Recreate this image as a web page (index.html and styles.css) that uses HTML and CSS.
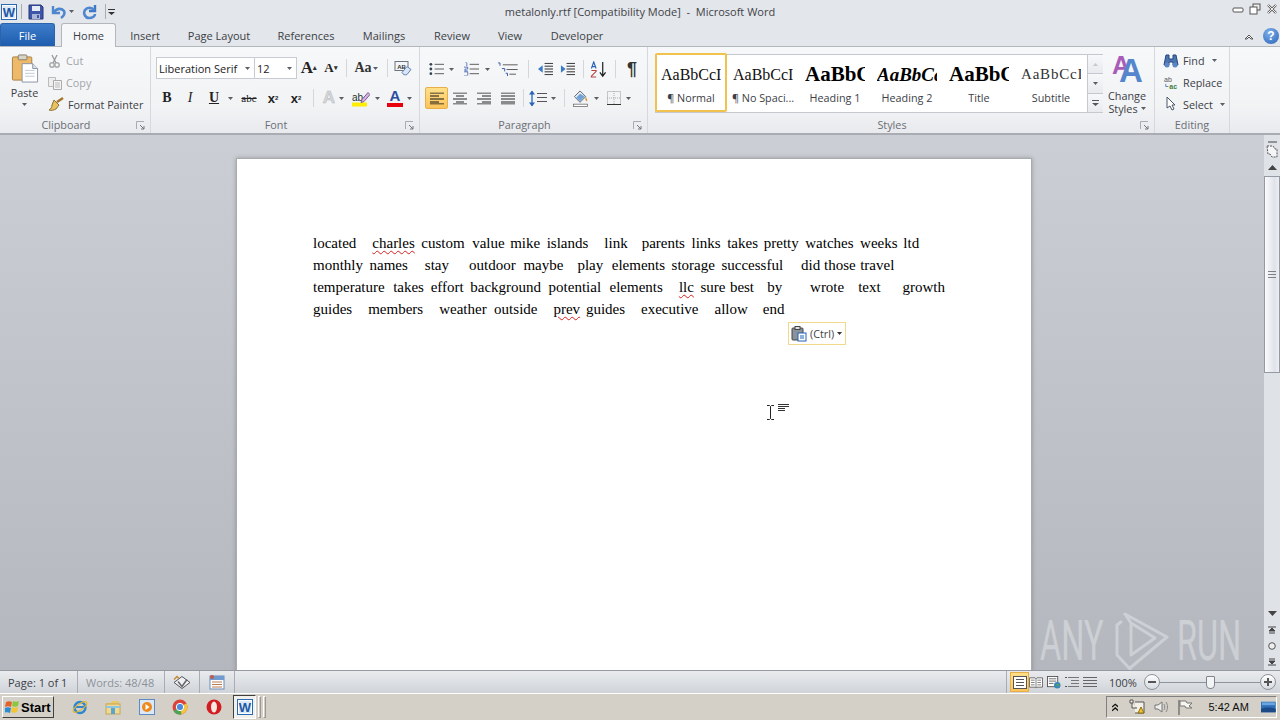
FILE: index.html
```html
<!DOCTYPE html>
<html lang="en">
<head>
<meta charset="utf-8">
<title>metalonly.rtf - Microsoft Word</title>
<link rel="stylesheet" href="styles.css">
</head>
<body>
<svg class="defs" width="0" height="0">
  <symbol id="arr" viewBox="0 0 5 3"><path d="M0 0h5L2.500 3z" fill="#5a5f66"/></symbol>
  <symbol id="bullets" viewBox="0 0 16 14"><path d="M6 2h10M6 7h10M6 12h10" stroke="#555" /><circle cx="2" cy="2" r="1.500" fill="#345"/><circle cx="2" cy="7" r="1.500" fill="#345"/><circle cx="2" cy="12" r="1.500" fill="#345"/></symbol>
  <symbol id="numbers" viewBox="0 0 16 14"><path d="M6 2h10M6 7h10M6 12h10" stroke="#555"/><path d="M1 0h2v4M0 5h4v2H1v2h3M0 10h4v4H0" fill="none" stroke="#35a" stroke-width=".8"/></symbol>
  <symbol id="multi" viewBox="0 0 22 16"><path d="M6 3h16M10 8h12M13 13h7" stroke="#555"/><path d="M1 1h2v3M5 7h3v3M9 12h2v3" fill="none" stroke="#35a"/></symbol>
  <symbol id="indentl" viewBox="0 0 16 14"><path d="M7 1h9M7 4h9M7 7h9M7 10h9M7 13h9" stroke="#222"/><path d="M0 7l5-4v8z" fill="#3a7bc8"/></symbol>
  <symbol id="indentr" viewBox="0 0 16 14"><path d="M7 1h9M7 4h9M7 7h9M7 10h9M7 13h9" stroke="#222"/><path d="M6 7L1 3v8z" fill="#3a7bc8"/></symbol>
  <symbol id="sort" viewBox="0 0 18 18"><path d="M14 1v14M11 12l3 4 3-4" fill="none" stroke="#222" stroke-width="1.300"/><path d="M2 8l2.500-7L7 8M3 6h3" fill="none" stroke="#2a62b5" stroke-width="1.200"/><path d="M2 10h5v1l-5 5v1h5" fill="none" stroke="#b8413a" stroke-width="1.200"/></symbol>
  <symbol id="al" viewBox="0 0 14 12"><path d="M0 .5h14M0 3.500h9M0 6.500h14M0 9.500h9M0 11.500h14" stroke="#111"/></symbol>
  <symbol id="ac" viewBox="0 0 14 12"><path d="M0 .5h14M3 3.500h8M0 6.500h14M3 9.500h8M0 11.500h14" stroke="#222"/></symbol>
  <symbol id="ar" viewBox="0 0 14 12"><path d="M0 .5h14M5 3.500h9M0 6.500h14M5 9.500h9M0 11.500h14" stroke="#222"/></symbol>
  <symbol id="aj" viewBox="0 0 14 12"><path d="M0 .5h14M0 3.500h14M0 6.500h14M0 9.500h14M0 11.500h14" stroke="#222"/></symbol>
  <symbol id="spacing" viewBox="0 0 18 16"><path d="M3 1v14" stroke="#3a7bc8" stroke-width="1.500"/><path d="M0 4l3-4 3 4zM0 12l3 4 3-4z" fill="#2a62b5"/><path d="M8 3h10M8 7h10M8 11h10" stroke="#555"/></symbol>
  <symbol id="fill" viewBox="0 0 18 18"><path d="M8 1l6 6-6 6-6-6z" fill="#e6eaf0" stroke="#5a6470"/><path d="M8 4l5 3-5 5-4-4z" fill="#6fa2d8"/><path d="M14 7c2 3 2 5 1 5s-2-2-1-5z" fill="#d89b3a"/><rect x="1" y="15" width="15" height="2.500" fill="#fff" stroke="#666" stroke-width=".8"/></symbol>
  <symbol id="border" viewBox="0 0 14 14"><rect x=".5" y=".5" width="13" height="13" fill="none" stroke="#999" stroke-dasharray="1 1"/><path d="M7 0v14M0 7h14" stroke="#aaa" stroke-dasharray="1 1"/><path d="M0 13.500h14" stroke="#333"/></symbol>
  <symbol id="monitor" viewBox="0 0 16 12"><rect width="16" height="12" fill="#2f6fb8"/><path d="M0 8c5-2 10-2 16 0v4H0z" fill="#1b4a86"/><rect x="1" y="1" width="14" height="3" fill="#6aa5df"/></symbol>
  <symbol id="viewpage" viewBox="0 0 14 13"><rect x=".5" y=".5" width="13" height="12" fill="#fff" stroke="#555"/><path d="M3 3.500h8M3 6.500h8M3 9.500h8" stroke="#555"/></symbol>
  <symbol id="viewbook" viewBox="0 0 15 13"><path d="M.5 1.500h6l1 1 1-1h6v10h-6l-1 1-1-1h-6z" fill="#fff" stroke="#666"/><path d="M7.500 2v10M2 4h4M2 6.500h4M2 9h4M9 4h4M9 6.500h4M9 9h4" stroke="#777"/></symbol>
  <symbol id="viewweb" viewBox="0 0 15 14"><rect x=".5" y=".5" width="11" height="11" fill="#fff" stroke="#555"/><path d="M2 3h8M2 5.500h8M2 8h5" stroke="#666"/><circle cx="11" cy="10" r="3.500" fill="#3a88b8"/><path d="M9 10l3-2 1 3z" fill="#5aa84a"/></symbol>
  <symbol id="viewoutline" viewBox="0 0 14 12"><path d="M3 1h11M6 4h8M6 7h8M3 10h11" stroke="#777"/><path d="M0 1h2M0 10h2" stroke="#555"/></symbol>
  <symbol id="viewdraft" viewBox="0 0 14 12"><path d="M0 1h14M0 4h14M0 7h14M0 10h14" stroke="#666"/></symbol>
</svg>

<div class="app">
  <header class="titlebar">
    <div class="qat">
      <svg class="ico16" viewBox="0 0 16 16"><rect x=".5" y=".5" width="15" height="15" fill="#fff" stroke="#2a6ab0"/><rect x="2" y="2" width="12" height="12" fill="#dde9f6"/><text x="8" y="13" class="svgw">W</text></svg>
      <span class="qsep"></span>
      <svg class="ico16" viewBox="0 0 16 16"><path d="M1 1h12l2 2v12H1z" fill="#3e56a8" stroke="#26367a"/><rect x="4" y="2" width="8" height="5" fill="#e7ecf6"/><rect x="4" y="10" width="8" height="5" fill="#aab4d4"/><rect x="9" y="11" width="2" height="3" fill="#3e56a8"/></svg>
      <svg class="ico16 gap-u" viewBox="0 0 16 16"><path d="M3 2v7h7" fill="none" stroke="#4f87cf" stroke-width="2.400"/><path d="M4 8c3-4 8-4 10-1 1 2 0 5-3 7" fill="none" stroke="#4f87cf" stroke-width="2.600"/></svg>
      <svg class="arrow3" viewBox="0 0 5 3"><use href="#arr"/></svg>
      <svg class="ico16 gap-r" viewBox="0 0 16 16"><path d="M13 1v6H7" fill="none" stroke="#3d78c6" stroke-width="2.400"/><path d="M12 6C10 3 5 3 3 6c-2 3 0 8 4 8s6-2 6-4" fill="none" stroke="#4f87cf" stroke-width="2.600"/></svg>
      <span class="qsep gap-q"></span>
      <svg class="qdrop" viewBox="0 0 7 6"><path d="M0 0h7v1H0zM0 3h7L3.500 6z" fill="#333"/></svg>
    </div>
    <div class="title">metalonly.rtf [Compatibility Mode]&nbsp; -&nbsp; Microsoft Word</div>
    <div class="winctl">
      <svg class="wi" viewBox="0 0 12 12"><rect x="1" y="5" width="10" height="4" rx="1" fill="#fff" stroke="#555"/></svg>
      <svg class="wi" viewBox="0 0 12 12"><rect x="4" y="1" width="7" height="6" fill="#eee" stroke="#555"/><rect x="1" y="4" width="7" height="7" fill="#fff" stroke="#555"/></svg>
      <svg class="wi" viewBox="0 0 12 12"><path d="M2 2l8 8M10 2l-8 8" stroke="#666" stroke-width="2.400"/><path d="M2 2l8 8M10 2l-8 8" stroke="#eee" stroke-width="1"/></svg>
    </div>
  </header>

  <nav class="tabs">
    <div class="tab file">File</div>
    <div class="tab home">Home</div>
    <div class="tab t-insert">Insert</div>
    <div class="tab t-layout">Page Layout</div>
    <div class="tab t-ref">References</div>
    <div class="tab t-mail">Mailings</div>
    <div class="tab t-rev">Review</div>
    <div class="tab t-view">View</div>
    <div class="tab t-dev">Developer</div>
    <div class="tabright">
      <svg class="collapse" viewBox="0 0 10 7"><path d="M1 6l4-4 4 4-2 0-2-2-2 2z" fill="#fff" stroke="#555"/></svg>
      <div class="help">?</div>
    </div>
  </nav>

  <section class="ribbon">
    <div class="group g-clip">
      <div class="body clip-body">
        <div class="paste">
          <svg class="paste-ico" viewBox="0 0 28 30"><rect x="1" y="3" width="20" height="24" rx="1" fill="#eeb968" stroke="#a5814a"/><rect x="7" y="1" width="9" height="5" rx="1" fill="#d9d4c8" stroke="#857b68"/><path d="M11 10h11l5 5v14H11z" fill="#fff" stroke="#8a93a2"/><path d="M22 10v5h5" fill="#dfe4ec" stroke="#8a93a2"/><path d="M14 17h10M14 20h10M14 23h10" stroke="#c3cad6"/></svg>
          <span class="paste-label">Paste</span>
          <svg class="arrow3" viewBox="0 0 5 3"><use href="#arr"/></svg>
        </div>
        <div class="clip-small">
          <div class="sm off"><svg class="ico14" viewBox="0 0 14 14"><path d="M4 1l4 8M9 1L5 9" stroke="#999" stroke-width="1.300"/><circle cx="4" cy="11" r="2.200" fill="none" stroke="#aaa" stroke-width="1.500"/><circle cx="9" cy="11" r="2.200" fill="none" stroke="#aaa" stroke-width="1.500"/></svg><span>Cut</span></div>
          <div class="sm off"><svg class="ico14" viewBox="0 0 14 14"><path d="M.5 1.500h7v9h-7z" fill="#eee" stroke="#bbb"/><path d="M5.500 4.500h8v9h-8z" fill="#f4f4f4" stroke="#aaa"/><path d="M7 7h5M7 9h5M7 11h5" stroke="#bbb"/></svg><span>Copy</span></div>
          <div class="sm"><svg class="ico14 brush" viewBox="0 0 16 14"><path d="M9 5L15 1" stroke="#a5752a" stroke-width="2.400"/><path d="M6 3l5 5-3 4c-2 1-5 2-7 1 2-1 3-3 3-5z" fill="#e8c25f" stroke="#8c7234"/></svg><span>Format Painter</span></div>
        </div>
      </div>
      <footer class="label lab-l">Clipboard<svg class="launcher" viewBox="0 0 9 9"><path d="M.5 8V.5H8" fill="none" stroke="#a8acb2"/><path d="M4 4l4 4M8 5v3H5" fill="none" stroke="#6f7680"/></svg></footer>
    </div>

    <div class="group g-font">
      <div class="body rows">
        <div class="row row-a">
          <div class="combo c-font"><span>Liberation Serif</span><svg class="arrow3" viewBox="0 0 5 3"><use href="#arr"/></svg></div>
          <div class="combo c-size"><span>12</span><svg class="arrow3" viewBox="0 0 5 3"><use href="#arr"/></svg></div>
          <div class="b w24 growa">A<sup>▴</sup></div>
          <div class="b w20 growb">A<sup>▾</sup></div>
          <span class="sep m-s1"></span>
          <div class="b w38 case">Aa<svg class="arrow3" viewBox="0 0 5 3"><use href="#arr"/></svg></div>
          <span class="sep m-s5"></span>
          <div class="b w30"><svg class="ico18" viewBox="0 0 18 16"><rect x="1" y="1" width="13" height="9" fill="#f3f5f8" stroke="#6d7580"/><text x="7.500" y="8" class="svgab">AB</text><path d="M8 12l5-6 4 3-4 5c-2 1-4 0-5-2z" fill="#dbe6f4" stroke="#5f83b3"/></svg></div>
        </div>
        <div class="row row-b">
          <div class="b w22 fb">B</div>
          <div class="b w24 fi">I</div>
          <div class="b w24 fu">U</div>
          <svg class="arrow3 w10a" viewBox="0 0 5 3"><use href="#arr"/></svg>
          <div class="b w26 fs">abc</div>
          <div class="b w22 fx">x<sub>2</sub></div>
          <div class="b w24 fx">x<sup>2</sup></div>
          <span class="sep m-s2"></span>
          <div class="b w20 ftfx">A</div>
          <svg class="arrow3 a-gray" viewBox="0 0 5 3"><use href="#arr"/></svg>
          <div class="b w22"><svg class="ico18" viewBox="0 0 18 16"><rect x="0" y="12" width="15" height="4" fill="#ffee00"/><text x="0" y="10" class="svgabs">ab</text><path d="M10 9l6-7 2 2-6 7-3 1z" fill="#d9b3e0" stroke="#7b5a92"/></svg></div>
          <svg class="arrow3 a-hl" viewBox="0 0 5 3"><use href="#arr"/></svg>
          <div class="b w20 fcolor">A</div>
          <svg class="arrow3 w8a" viewBox="0 0 5 3"><use href="#arr"/></svg>
        </div>
      </div>
      <footer class="label lab-l">Font<svg class="launcher" viewBox="0 0 9 9"><path d="M.5 8V.5H8" fill="none" stroke="#a8acb2"/><path d="M4 4l4 4M8 5v3H5" fill="none" stroke="#6f7680"/></svg></footer>
    </div>

    <div class="group g-para">
      <div class="body rows para-rows">
        <div class="row row-p1">
          <div class="b w22"><svg class="ico15" viewBox="0 0 16 14"><use href="#bullets"/></svg></div>
          <svg class="arrow3 a-list" viewBox="0 0 5 3"><use href="#arr"/></svg>
          <div class="b w24"><svg class="ico15" viewBox="0 0 16 14"><use href="#numbers"/></svg></div>
          <svg class="arrow3 w8a" viewBox="0 0 5 3"><use href="#arr"/></svg>
          <div class="b w30"><svg class="ico21" viewBox="0 0 22 16"><use href="#multi"/></svg></div>
          <span class="sep m-s6"></span>
          <div class="b w22 m-i"><svg class="ico15" viewBox="0 0 16 14"><use href="#indentl"/></svg></div>
          <div class="b w22"><svg class="ico15" viewBox="0 0 16 14"><use href="#indentr"/></svg></div>
          <span class="sep m-s7"></span>
          <div class="b w28"><svg class="ico18" viewBox="0 0 18 18"><use href="#sort"/></svg></div>
          <span class="sep m-s8"></span>
          <div class="b w32 pil">¶</div>
        </div>
        <div class="row row-p2">
          <div class="b w23 on"><svg class="ico14b" viewBox="0 0 14 12"><use href="#al"/></svg></div>
          <div class="b w24"><svg class="ico14b" viewBox="0 0 14 12"><use href="#ac"/></svg></div>
          <div class="b w24"><svg class="ico14b" viewBox="0 0 14 12"><use href="#ar"/></svg></div>
          <div class="b w23"><svg class="ico14b" viewBox="0 0 14 12"><use href="#aj"/></svg></div>
          <span class="sep m-s3"></span>
          <div class="b w22"><svg class="ico18" viewBox="0 0 18 16"><use href="#spacing"/></svg></div>
          <svg class="arrow3 w8a" viewBox="0 0 5 3"><use href="#arr"/></svg>
          <span class="sep m-s4"></span>
          <div class="b w24"><svg class="ico18" viewBox="0 0 18 18"><use href="#fill"/></svg></div>
          <svg class="arrow3 a-fill" viewBox="0 0 5 3"><use href="#arr"/></svg>
          <div class="b w24"><svg class="ico14" viewBox="0 0 14 14"><use href="#border"/></svg></div>
          <svg class="arrow3" viewBox="0 0 5 3"><use href="#arr"/></svg>
        </div>
      </div>
      <footer class="label lab-l">Paragraph<svg class="launcher" viewBox="0 0 9 9"><path d="M.5 8V.5H8" fill="none" stroke="#a8acb2"/><path d="M4 4l4 4M8 5v3H5" fill="none" stroke="#6f7680"/></svg></footer>
    </div>

    <div class="group g-styles">
      <div class="body styles-body">
        <div class="gallery">
          <div class="style sel"><div class="pv">AaBbCcI</div><div class="nm">¶ Normal</div></div>
          <div class="style"><div class="pv">AaBbCcI</div><div class="nm">¶ No Spaci...</div></div>
          <div class="style"><div class="pv h1">AaBbCc</div><div class="nm">Heading 1</div></div>
          <div class="style"><div class="pv h2">AaBbCc</div><div class="nm">Heading 2</div></div>
          <div class="style"><div class="pv h3">AaBbCc</div><div class="nm">Title</div></div>
          <div class="style"><div class="pv sub">AaBbCcI</div><div class="nm">Subtitle</div></div>
          <div class="gscroll">
            <div class="gs"><svg class="arrow3" viewBox="0 0 5 3"><path d="M2.500 0L5 3H0z" fill="#c5c8cd"/></svg></div>
            <div class="gs"><svg class="arrow3" viewBox="0 0 5 3"><use href="#arr"/></svg></div>
            <div class="gs"><svg class="more" viewBox="0 0 7 6"><path d="M0 0h7v1H0zM0 3h7L3.500 6z" fill="#555"/></svg></div>
          </div>
        </div>
        <div class="change">
          <svg class="change-ico" viewBox="0 0 32 34"><text x="1" y="24" class="svgA1">A</text><text x="8" y="32" class="svgA2">A</text></svg>
          <span class="chg">Change</span>
          <span class="chg">Styles <svg class="arrow3" viewBox="0 0 5 3"><use href="#arr"/></svg></span>
        </div>
      </div>
      <footer class="label lab-l">Styles<svg class="launcher" viewBox="0 0 9 9"><path d="M.5 8V.5H8" fill="none" stroke="#a8acb2"/><path d="M4 4l4 4M8 5v3H5" fill="none" stroke="#6f7680"/></svg></footer>
    </div>

    <div class="group g-edit">
      <div class="body edit-body">
        <div class="sm"><svg class="ico14 wide" viewBox="0 0 16 14"><path d="M3 1h3v4h4V1h3l2 10h-5V8H6v3H1z" fill="#4b74b2" stroke="#26467c"/><circle cx="4" cy="11" r="2.500" fill="#5d87c4"/><circle cx="12" cy="11" r="2.500" fill="#5d87c4"/></svg><span>Find</span><svg class="arrow3 mr" viewBox="0 0 5 3"><use href="#arr"/></svg></div>
        <div class="sm"><svg class="ico14 wide" viewBox="0 0 16 16"><text x="0" y="7" class="svgrep">ab</text><text x="6" y="15" class="svgrep2">ac</text><path d="M2 9v3h3" fill="none" stroke="#4b74b2"/></svg><span>Replace</span></div>
        <div class="sm"><svg class="ico14 wide" viewBox="0 0 16 14"><path d="M4 0v11l3-2 2 4 2-1-2-4h3z" fill="#fff" stroke="#4a5666"/></svg><span>Select</span><svg class="arrow3 mr" viewBox="0 0 5 3"><use href="#arr"/></svg></div>
      </div>
      <footer class="label">Editing</footer>
    </div>
  </section>

  <main class="workspace">
    <div class="canvas">
      <article class="page">
        <p class="ln">located    <span class="k1"></span><span class="sq">charles</span>  <span class="n1"></span>custom  value  <span class="n2"></span>mike  <span class="n1"></span>islands    <span class="k1"></span>link    <span class="n1"></span>parents  <span class="n1"></span>links  <span class="n1"></span>takes <span class="k2"></span>pretty  <span class="n1"></span>watches  <span class="n1"></span>weeks <span class="k2"></span>ltd</p>
        <p class="ln">monthly  <span class="n1"></span>names    <span class="k2"></span>stay    <span class="k5"></span>outdoor <span class="k4"></span>maybe    <span class="n1"></span>play  <span class="k1"></span>elements  <span class="n1"></span>storage  <span class="n1"></span>successful    <span class="k3"></span>did those  <span class="n3"></span>travel</p>
        <p class="ln">temperature  <span class="k1"></span>takes <span class="k3"></span>effort  <span class="n1"></span>background  potential  <span class="k1"></span>elements    <span class="k1"></span><span class="sq">llc</span>  <span class="n1"></span>sure  <span class="n3"></span>best   <span class="k2"></span>by     <span class="k9"></span>wrote    <span class="n1"></span>text     <span class="k3"></span>growth</p>
        <p class="ln">guides    <span class="k1"></span>members    <span class="k1"></span>weather  outside    <span class="k1"></span><span class="sq">prev</span> <span class="k2"></span>guides    <span class="k1"></span>executive    <span class="k1"></span>allow    end</p>
      </article>
      <div class="smarttag">
        <svg class="ico16" viewBox="0 0 16 16"><rect x="1" y="2" width="11" height="12" rx="1" fill="#8b929c" stroke="#444"/><rect x="4" y="0.500" width="5" height="3" fill="#ddd" stroke="#444"/><rect x="7" y="7" width="8" height="8" fill="#fff" stroke="#1f62b5"/><path d="M9 10h4M9 12h4" stroke="#1f62b5"/></svg>
        <span>(Ctrl)</span>
        <svg class="arrow3" viewBox="0 0 5 3"><path d="M0 0h5L2.500 3z" fill="#333"/></svg>
      </div>
      <svg class="ibeam" viewBox="0 0 26 22"><path d="M2 2.500h2.500l1 1 1-1H9M5.500 3.500v12M2 16.500h2.500l1-1 1 1H9" fill="none" stroke="#222"/><path d="M13 1.500h11M13 3.500h11M13 5.500h7M13 7.500h7" stroke="#333"/></svg>
      <div class="watermark">
        <span class="wm wm-a">ANY</span>
        <svg class="wm-logo" viewBox="0 0 58 60"><path d="M8 11L4 14v30l13 14M12 3l42 23-37 31M18 12v32l24-17z M12 3l6 9" fill="none" stroke="#fff" stroke-width="3" stroke-linejoin="round" stroke-linecap="round"/></svg>
        <span class="wm wm-r">RUN</span>
      </div>
    </div>
    <aside class="vscroll">
      <div class="ruler"><span class="dash"></span><svg class="rul" viewBox="0 0 12 14"><path d="M1 1h6l2 3h2v8H6l-2-3H2z" fill="#f4f5f7" stroke="#555" stroke-dasharray="2 1"/></svg></div>
      <div class="sbtn"><svg class="tri" viewBox="0 0 9 5"><path d="M4.500 0L9 5H0z" fill="#444"/></svg></div>
      <div class="thumb"><span class="grip"></span></div>
      <div class="strack"></div>
      <div class="sbtn"><svg class="tri" viewBox="0 0 9 5"><path d="M0 0h9L4.500 5z" fill="#444"/></svg></div>
      <div class="sbtn s2"><svg class="tri2" viewBox="0 0 8 8"><path d="M0 1h8M4 2L1 5h6zM1 7h6" stroke="#444" fill="#444"/></svg></div>
      <div class="sbtn s2"><svg class="tri2" viewBox="0 0 8 8"><circle cx="4" cy="4" r="3.300" fill="#eee" stroke="#555"/></svg></div>
      <div class="sbtn s2"><svg class="tri2" viewBox="0 0 8 8"><path d="M1 1h6M1 3h6L4 6zM0 7h8" stroke="#444" fill="#444"/></svg></div>
    </aside>
  </main>

  <footer class="status">
    <div class="cell c1">Page: 1 of 1</div>
    <div class="cell c2">Words: 48/48</div>
    <div class="cell c3"><svg class="ico18" viewBox="0 0 18 16"><path d="M1 8l8-6 8 6-8 6z" fill="#eef1f5" stroke="#555"/><path d="M5 7l4 5 5-7" fill="none" stroke="#666" stroke-width="1.500"/><path d="M1 5l3-3 2 2" fill="none" stroke="#c78b36" stroke-width="1.500"/></svg></div>
    <div class="cell c4"><svg class="ico16" viewBox="0 0 16 16"><rect x="1" y="2" width="14" height="13" fill="#fff" stroke="#6a8bb5"/><rect x="1" y="2" width="14" height="4" fill="#6f9bd1"/><path d="M3 8h10M3 10.500h10M3 13h10" stroke="#b97b50"/><circle cx="3" cy="3" r="2" fill="#c05a4a"/></svg></div>
    <div class="stat-right">
      <span class="vsep"></span>
      <div class="vb on"><svg class="ico14b" viewBox="0 0 14 13"><use href="#viewpage"/></svg></div>
      <div class="vb v-book"><svg class="ico14b" viewBox="0 0 15 13"><use href="#viewbook"/></svg></div>
      <div class="vb"><svg class="ico14b" viewBox="0 0 15 14"><use href="#viewweb"/></svg></div>
      <div class="vb"><svg class="ico14b" viewBox="0 0 14 12"><use href="#viewoutline"/></svg></div>
      <div class="vb"><svg class="ico14b" viewBox="0 0 14 12"><use href="#viewdraft"/></svg></div>
      <span class="zoomtxt">100%</span>
      <div class="zbtn"><span class="zh"></span></div>
      <div class="slider"><span class="knob"></span></div>
      <div class="zbtn"><span class="zh"></span><span class="zv"></span></div>
    </div>
  </footer>

  <footer class="taskbar">
    <div class="start">
      <svg class="flag" viewBox="0 0 16 14"><path d="M1 2c2-1 4-1 6 0L6 7C4 6 2 6 0 7z" fill="#e2622c"/><path d="M8 1c2 1 4 1 6 0l-1 5c-2 1-4 1-6 0z" fill="#8cc63f"/><path d="M0 8c2-1 4-1 6 0l-1 5c-2-1-4-1-6 0z" fill="#2a8dd4"/><path d="M7 7c2 1 4 1 6 0l-1 5c-2 1-4 1-6 0z" fill="#f4c431"/></svg>
      <span>Start</span>
    </div>
    <div class="tk tk-ie"><svg class="ico16" viewBox="0 0 16 16"><circle cx="8" cy="8.500" r="5.500" fill="none" stroke="#2f86cf" stroke-width="2.400"/><path d="M3 8h10" stroke="#2f86cf" stroke-width="2"/><ellipse cx="8" cy="8" rx="8" ry="3" fill="none" stroke="#e0b52c" transform="rotate(-35 8 8)"/></svg></div>
    <div class="tk"><svg class="ico16" viewBox="0 0 16 16"><path d="M1 4h5l1-2h7v3H1z" fill="#e8c869"/><rect x="1" y="5" width="14" height="10" fill="#f1d98f" stroke="#c2a658"/><rect x="6" y="9" width="4" height="6" fill="#5aa5cf"/><rect x="1" y="7" width="14" height="2" fill="#8ec6e2"/></svg></div>
    <div class="tk"><svg class="ico16" viewBox="0 0 16 16"><rect x=".5" y=".5" width="15" height="15" fill="#dde8f5" stroke="#5c8bc4"/><circle cx="8" cy="8" r="5" fill="#ee8a1d"/><path d="M6.500 5l4 3-4 3z" fill="#fff"/></svg></div>
    <div class="tk"><svg class="ico16" viewBox="0 0 16 16"><circle cx="8" cy="8" r="7.500" fill="#d9453a"/><path d="M8 8L1.500 12a7.500 7.500 0 0 0 8 3.300z" fill="#4aa655"/><path d="M8 8l6.500-3.700a7.500 7.500 0 0 1-5 11z" fill="#f3c63b"/><circle cx="8" cy="8" r="3.700" fill="#4b8ce0" stroke="#fff"/></svg></div>
    <div class="tk"><svg class="ico16" viewBox="0 0 16 16"><ellipse cx="8" cy="8" rx="7.500" ry="7.500" fill="#d21c22"/><ellipse cx="8" cy="8" rx="3" ry="5.500" fill="#f5e9e0"/></svg></div>
    <div class="tk-word">
      <div class="tk-pressed"><svg class="ico16" viewBox="0 0 16 16"><rect x=".5" y=".5" width="15" height="15" fill="#fff" stroke="#2a6ab0"/><rect x="2" y="2" width="12" height="12" fill="#dde9f6"/><text x="8" y="13" class="svgw">W</text></svg></div>
      <span class="grab"></span><span class="grab"></span>
    </div>
    <div class="tray">
      <svg class="chev" viewBox="0 0 7 9"><path d="M0 4l3.500-3L7 4M0 8l3.500-3L7 8" fill="none" stroke="#111" stroke-width="1.400"/></svg>
      <svg class="ico16 t-net" viewBox="0 0 16 16"><path d="M1 1h3v3H1zM3 4v5h5M6 3h9v11H6" fill="#f3f0e8" stroke="#555"/><path d="M9 14l3-6 3 6z" fill="#f3c52b" stroke="#8c6f12"/></svg>
      <svg class="ico16 t-sp" viewBox="0 0 16 16"><path d="M2 6h3l4-3v10l-4-3H2z" fill="#eee" stroke="#777"/><path d="M11 5c1 2 1 4 0 6M13 3c2 3 2 7 0 10" fill="none" stroke="#888"/></svg>
      <svg class="ico16 t-fl" viewBox="0 0 16 16"><path d="M2 1v15" stroke="#777" stroke-width="1.500"/><path d="M3 2h6l1 2h5l-3 3 3 2H9L8 7H3z" fill="#f7f5ef" stroke="#777"/></svg>
      <span class="clock">5:42 AM</span>
      <svg class="mon" viewBox="0 0 16 12"><use href="#monitor"/></svg>
    </div>
  </footer>
</div>
</body>
</html>
```

FILE: styles.css
```css
* { box-sizing: border-box; }
html, body { margin: 0; padding: 0; }
body { width: 1280px; height: 720px; overflow: hidden; font-family: "Open Sans", "Noto Sans", sans-serif; font-size: 10.8px; color: #3c4046; }
.defs { display: block; height: 0; }
.app { width: 1280px; height: 720px; display: flex; flex-direction: column; }

/* title bar */
.titlebar { height: 23px; display: flex; align-items: center; position: relative; background: #e3e6ea; flex: none; }
.qat { display: flex; align-items: center; padding-left: 1px; }
.ico16 { width: 16px; height: 16px; flex: none; display: block; }
.ico14 { width: 14px; height: 14px; flex: none; display: block; overflow: visible; }
.ico14b { width: 14px; height: 13px; flex: none; display: block; }
.ico15 { width: 15px; height: 14px; flex: none; display: block; }
.ico18 { width: 18px; height: 17px; flex: none; display: block; }
.ico21 { width: 21px; height: 15px; flex: none; display: block; }
.qsep { width: 1px; height: 15px; background: #a9adb3; margin: 0 6px 0 4px; }
.gap-u { margin-left: 6px; margin-right: 3px; }
.gap-r { margin-left: 8px; }
.gap-q { margin: 0 1px 0 7px; }
.qdrop { width: 7px; height: 6px; margin-left: 1px; }
.arrow3 { width: 5px; height: 3px; flex: none; display: block; overflow: visible; }
.svgw { font: bold 13px "Liberation Sans", sans-serif; fill: #1c58a5; text-anchor: middle; }
.svgab { font: bold 6px "Liberation Sans", sans-serif; fill: #333; text-anchor: middle; }
.svgabs { font: 10px "Liberation Sans", sans-serif; fill: #233; }
.svgA1 { font: bold 25px "Liberation Sans", sans-serif; fill: #a95bb8; }
.svgA2 { font: bold 33px "Liberation Sans", sans-serif; fill: #5585cc; }
.svgrep { font: 8px "Liberation Sans", sans-serif; fill: #555; }
.svgrep2 { font: bold 8px "Liberation Sans", sans-serif; fill: #3f7d3a; }
.title { position: absolute; left: 0; right: 0; top: 4px; text-align: center; font-size: 11px; line-height: 16px; color: #3e4248; pointer-events: none; }
.winctl { margin-left: auto; display: flex; gap: 5px; padding-right: 2px; margin-top: -6px; }
.wi { width: 12px; height: 12px; display: block; }

/* tabs */
.tabs { height: 24px; display: flex; align-items: flex-end; background: #e3e6ea; border-bottom: 1px solid #b3b7bc; flex: none; font-size: 11px; }
.tab { height: 23px; line-height: 25px; text-align: center; color: #3b3f45; flex: none; }
.file { width: 55px; margin-right: 6px; background: linear-gradient(#3d7cca, #1e5dae); color: #fff; border-radius: 3px 3px 0 0; border: 1px solid #2b63ac; border-bottom: 0; line-height: 23px; }
.home { width: 55px; background: #f6f7f9; border: 1px solid #b3b7bc; border-bottom: 0; border-radius: 3px 3px 0 0; height: 24px; margin-bottom: -1px; line-height: 24px; }
.t-insert { width: 58px; }
.t-layout { width: 90px; }
.t-ref { width: 84px; }
.t-mail { width: 72px; }
.t-rev { width: 64px; }
.t-view { width: 52px; }
.t-dev { width: 82px; }
.tabright { margin-left: auto; display: flex; align-items: center; gap: 9px; padding-right: 1px; height: 23px; padding-top: 3px; }
.collapse { width: 10px; height: 7px; display: block; }
.help { width: 16px; height: 16px; border-radius: 50%; background: radial-gradient(circle at 40% 30%, #7eb0ea, #2a63b8); color: #fff; font: bold 12px/16px "Liberation Sans", sans-serif; text-align: center; }

/* ribbon */
.ribbon { height: 88px; flex: none; display: flex; background: linear-gradient(#f7f8fa, #f2f3f5 70%, #e8eaee); border-bottom: 2px solid #a9adb3; }
.group { display: flex; flex-direction: column; border-right: 1px solid #d5d8dc; flex: none; }
.g-clip { width: 151px; }
.g-font { width: 269px; }
.g-para { width: 228px; }
.g-styles { width: 507px; }
.g-edit { width: 75px; }
.body { flex: 1; min-height: 0; }
.label { height: 18px; flex: none; line-height: 20px; text-align: center; color: #6a6e74; position: relative; }
.lab-l { padding-right: 18px; }
.launcher { position: absolute; right: 5px; top: 6px; width: 9px; height: 9px; }

.clip-body { display: flex; padding: 3px 0 0 6px; }
.paste { width: 37px; display: flex; flex-direction: column; align-items: center; }
.paste-ico { width: 28px; height: 29px; margin-top: 4px; display: block; }
.paste-label { margin-top: 2px; line-height: 15px; }
.paste .arrow3 { margin-top: 3px; }
.clip-small { margin-left: 5px; display: flex; flex-direction: column; }
.sm { height: 22px; display: flex; align-items: center; gap: 4px; color: #3c4046; white-space: nowrap; }
.sm.off { color: #a2a5aa; }
.brush { width: 16px; }
.wide { width: 16px; }
.mr { margin-left: 3px; }

.rows { display: flex; flex-direction: column; padding-left: 5px; }
.row { display: flex; align-items: center; flex: none; }
.row-a { height: 24px; margin-top: 9px; }
.row-b { height: 24px; margin-top: 6px; }
.b { height: 22px; display: flex; align-items: center; justify-content: center; flex: none; border-radius: 2px; }
.w20 { width: 20px; } .w22 { width: 22px; } .w23 { width: 23px; } .w24 { width: 24px; } .w26 { width: 26px; } .w28 { width: 28px; } .w30 { width: 30px; } .w32 { width: 32px; } .w38 { width: 38px; }
.w10a { margin: 0 3px 0 2px; } .w8a { margin: 0 2px; }
.a-gray { margin: 0 6px 0 0; }
.a-hl { margin: 0 5px 0 3px; }
.a-list { margin: 0 5px 0 2px; }
.a-fill { margin: 0 3px 0 1px; }
.combo { height: 22px; background: #fff; border: 1px solid #c8ccd2; display: flex; align-items: center; justify-content: space-between; padding: 0 4px 0 2px; color: #222; font-size: 11px; flex: none; }
.c-font { width: 99px; }
.c-size { width: 43px; margin-left: -1px; }
.growa, .growb { font: bold 17px "Liberation Serif", serif; color: #222; }
.growb { font-size: 13px; }
.growa sup, .growb sup { font-size: 7px; line-height: 0; color: #333; }
.sep { width: 1px; height: 18px; background: #d3d6da; flex: none; }
.m-s1 { margin: 0 0 0 5px; }
.m-s5 { margin: 0 0 0 2px; }
.m-s6 { margin: 0 5px 0 6px; }
.m-s7 { margin: 0 0 0 5px; }
.m-s8 { margin: 0 0 0 3px; }
.case { font: bold 14px "Liberation Serif", serif; color: #333; gap: 1px; }
.fb, .fi, .fu, .fs, .fx { font-family: "Liberation Serif", serif; color: #222; }
.fb { font-weight: bold; font-size: 14px; }
.fi { font-style: italic; font-size: 14px; }
.fu { font-weight: bold; font-size: 14px; text-decoration: underline; }
.fs { font-size: 11px; text-decoration: line-through; }
.fx { font: bold 13px "Liberation Sans", sans-serif; }
.fx sub, .fx sup { font-size: 6px; line-height: 0; }
.m-s2 { margin: 0 0 0 5px; }
.ftfx { font: bold 17px "Liberation Sans", sans-serif; color: #d5d7da; -webkit-text-stroke: .5px #b6b9bd; margin-left: 5px; }
.fcolor { font: bold 15px/13px "Liberation Sans", sans-serif; color: #2a4fa0; border-bottom: 5px solid transparent; position: relative; }
.fcolor::after { content: ""; position: absolute; left: 2px; right: 2px; bottom: -3px; height: 4px; background: #e8000b; }

.row-p1 { height: 22px; margin-top: 11px; }
.row-p2 { height: 22px; margin-top: 7px; }
.m-i { margin: 0; }
.pil { font: bold 18px "Liberation Sans", sans-serif; color: #333; }
.on { background: linear-gradient(#ffe08a, #fbc45b); border: 1px solid #e8ae48; }
.m-s3 { margin: 0 3px 0 4px; }
.m-s4 { margin: 0 4px 0 6px; }

.styles-body { display: flex; padding: 7px 0 0 7px; }
.gallery { width: 448px; height: 59px; display: flex; background: #fff; border: 1px solid #c5c9cf; flex: none; }
.style { width: 72px; height: 100%; display: flex; flex-direction: column; align-items: center; overflow: hidden; flex: none; border: 2px solid transparent; }
.style.sel { border: 2px solid #f2c24f; background: #fff; border-radius: 2px; margin: -2px 0 -2px -1px; height: 59px; padding-top: 2px; }
.pv { height: 30px; font: 16px/35px "Liberation Serif", serif; color: #111; white-space: nowrap; overflow: hidden; width: 60px; text-align: left; }
.h1, .h3 { font-size: 21px; font-weight: bold; color: #000; }
.h2 { font-size: 19px; font-weight: bold; font-style: italic; color: #000; }
.sub { font-size: 15px; letter-spacing: .8px; color: #333; }
.nm { line-height: 15px; margin-top: 3px; white-space: nowrap; }
.gscroll { width: 16px; margin-left: auto; display: flex; flex-direction: column; border-left: 1px solid #c5c9cf; flex: none; }
.gs { flex: 1; display: flex; align-items: center; justify-content: center; background: linear-gradient(#f7f8fa, #e8eaee); border-bottom: 1px solid #c5c9cf; }
.gs:last-child { border-bottom: 0; }
.more { width: 7px; height: 6px; }
.change { width: 48px; display: flex; flex-direction: column; align-items: center; margin-top: -4px; }
.change-ico { width: 32px; height: 34px; display: block; }
.chg { line-height: 13px; display: flex; align-items: center; gap: 3px; }
.change-ico + .chg { margin-top: 5px; }

.edit-body { display: flex; flex-direction: column; padding: 3px 0 0 8px; }

/* workspace */
.workspace { flex: 1; min-height: 0; display: flex; background: linear-gradient(#cbced4, #b4b8be); }
.canvas { flex: 1; position: relative; overflow: hidden; padding: 24px 0 0 237px; }
.page { width: 794px; height: 620px; background: #fff; padding: 73px 0 0 76px; box-shadow: 0 0 0 1px #a8abb0, 0 0 4px 1px rgba(90,90,90,.45); }
.ln { margin: 0; font: 15px/22px "Liberation Serif", serif; color: #000; white-space: pre; }
.sq { text-decoration: underline wavy #d8201e 1px; text-underline-offset: 2px; }
.k1 { margin-left: 1px; } .k2 { margin-left: 2px; } .k3 { margin-left: 3px; } .k4 { margin-left: 4px; } .k5 { margin-left: 5px; } .k9 { margin-left: 9px; }
.n1 { margin-left: -1px; } .n2 { margin-left: -2px; } .n3 { margin-left: -3px; }
.smarttag { position: absolute; left: 788px; top: 187px; width: 58px; height: 23px; background: #fff; border: 1px solid #f0d98a; display: flex; align-items: center; gap: 3px; padding-left: 2px; color: #444; }
.ibeam { position: absolute; left: 765px; top: 268px; width: 26px; height: 22px; }
.watermark { position: absolute; left: 1040px; top: 476px; height: 60px; display: flex; align-items: center; opacity: .32; }
.wm { font: 400 56px/60px Roboto, sans-serif; color: #fff; transform: scaleX(.58); transform-origin: 0 50%; display: block; white-space: nowrap; }
.wm-a { margin-right: -36px; }
.wm-r { margin-left: 6px; margin-right: -44px; }
.wm-logo { width: 58px; height: 60px; display: block; }
.vscroll { width: 16px; flex: none; display: flex; flex-direction: column; align-items: stretch; background: #dfe2e7; }
.ruler { height: 24px; flex: none; display: flex; flex-direction: column; align-items: center; justify-content: flex-end; gap: 2px; }
.dash { width: 9px; height: 2px; background: #8f939a; }
.rul { width: 12px; height: 14px; display: block; }
.sbtn { height: 17px; flex: none; display: flex; align-items: center; justify-content: center; }
.s2 { height: 16px; }
.tri { width: 9px; height: 5px; display: block; }
.tri2 { width: 8px; height: 8px; display: block; }
.thumb { height: 197px; flex: none; background: linear-gradient(90deg, #fbfbfc, #dfe2ea 70%, #eff0f4); border: 1px solid #9599a1; display: flex; align-items: center; justify-content: center; }
.grip { width: 8px; height: 7px; border-top: 1px solid #7d8189; border-bottom: 1px solid #7d8189; background: linear-gradient(#7d8189, #7d8189) center / 100% 1px no-repeat; }
.strack { flex: 1; }

/* status bar */
.status { height: 23px; flex: none; display: flex; align-items: center; background: linear-gradient(#e9ebee, #d0d4d9); border-top: 1px solid #96999f; font-size: 11px; }
.cell { height: 100%; display: flex; align-items: center; border-right: 1px solid #a9adb3; flex: none; }
.c1 { width: 78px; padding-left: 8px; }
.c2 { width: 87px; padding-left: 8px; color: #8e9298; }
.c3 { width: 35px; justify-content: center; }
.c4 { width: 35px; justify-content: center; }
.stat-right { margin-left: auto; display: flex; align-items: center; height: 100%; padding-right: 4px; }
.vsep { width: 1px; height: 100%; background: #a9adb3; margin-right: 3px; }
.vb { width: 19px; height: 20px; display: flex; align-items: center; justify-content: center; border: 1px solid transparent; }
.vb + .vb { margin-left: -1px; }
.vb.v-book { margin-left: -3px; }
.vb.on { border-color: #e8ae48; }
.zoomtxt { margin-left: 10px; width: 31px; }
.zbtn { width: 16px; height: 16px; border-radius: 50%; background: linear-gradient(#fff, #d6dae0); border: 1px solid #8e939b; position: relative; margin-left: 4px; flex: none; }
.zh { position: absolute; left: 3px; right: 3px; top: 6px; height: 2px; background: #555; }
.zv { position: absolute; top: 3px; bottom: 3px; left: 6px; width: 2px; background: #555; }
.slider { width: 100px; height: 1px; background: #8e939b; position: relative; flex: none; }
.knob { position: absolute; left: 46px; top: -6px; width: 9px; height: 13px; background: #f3f4f6; border: 1px solid #7f848c; border-radius: 1px 1px 4px 4px; }
.slider + .zbtn { margin-left: 0; }

/* taskbar */
.taskbar { height: 27px; flex: none; display: flex; align-items: center; background: #d4d0c8; border-top: 1px solid #fff; padding-left: 2px; font-family: "Liberation Sans", sans-serif; }
.start { width: 52px; height: 22px; display: flex; align-items: center; gap: 0; padding-left: 2px; background: #d4d0c8; border: 1px solid; border-color: #fff #404040 #404040 #fff; font: bold 13px "Liberation Sans", sans-serif; color: #000; flex: none; }
.flag { width: 16px; height: 14px; display: block; }
.tk { width: 33.500px; display: flex; justify-content: center; flex: none; }
.tk-ie { margin-left: 9px; }
.tk-word { display: flex; align-items: center; gap: 2px; margin-left: 2.500px; height: 24px; flex: none; }
.tk-pressed { width: 23px; height: 24px; display: flex; align-items: center; justify-content: center; background: #f2f0ec; border: 1px solid; border-color: #404040 #fff #fff #404040; }
.grab { width: 3px; height: 22px; border: 1px solid; border-color: #fff #9b978f #9b978f #fff; }
.tray { margin-left: auto; margin-right: 3px; width: 171px; height: 22px; display: flex; align-items: center; border: 1px solid; border-color: #808080 #fff #fff #808080; font-size: 11px; color: #111; }
.chev { width: 7px; height: 9px; margin-left: 5px; display: block; }
.t-net { margin-left: 11px; }
.t-sp { margin-left: 8px; }
.t-fl { margin-left: 8px; }
.clock { margin-left: 15px; width: 45px; white-space: nowrap; }
.mon { width: 16px; height: 12px; margin-left: 11px; display: block; }
```
